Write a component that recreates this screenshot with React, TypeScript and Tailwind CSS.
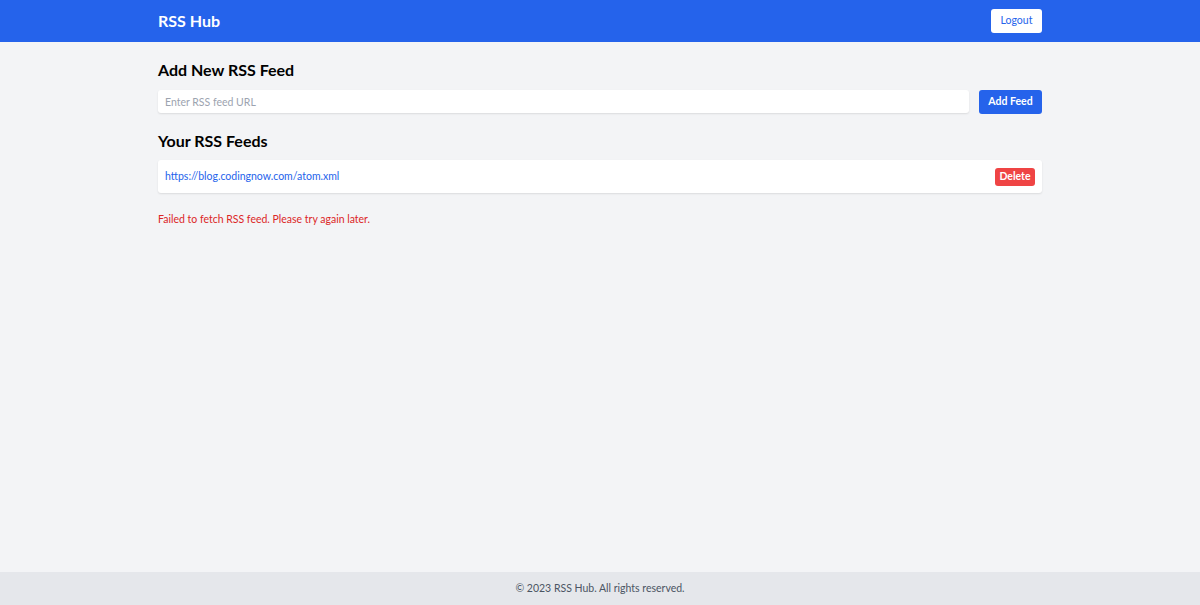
export default function App() {
  return (
    <div
      className="min-h-screen flex flex-col bg-[#f3f4f6]"
      style={{ fontFamily: 'Lato, "Noto Sans", sans-serif' }}
    >
      <header className="h-[42px] bg-[#2563eb] shrink-0">
        <div className="w-[884px] mx-auto h-full flex items-center justify-between">
          <h1 className="text-white font-bold text-[16px]">RSS Hub</h1>
          <button className="h-[24px] w-[51px] bg-white text-[#2563eb] text-[10.5px] rounded-[3px]">
            Logout
          </button>
        </div>
      </header>

      <main className="flex-1 w-[884px] mx-auto pt-[16px]">
        <h2 className="text-[16px] font-bold text-black leading-[24px]">Add New RSS Feed</h2>
        <div className="mt-[8px] flex gap-[10px]">
          <input
            className="flex-1 h-[23px] bg-white rounded-[3px] shadow-[0_1px_2px_rgba(0,0,0,0.1)] px-[7px] text-[10.5px] outline-none placeholder:text-[#9ca3af]"
            placeholder="Enter RSS feed URL"
          />
          <button className="w-[63px] h-[24px] bg-[#2563eb] text-white font-bold text-[10.5px] rounded-[3px]">
            Add Feed
          </button>
        </div>

        <h2 className="mt-[15px] text-[16px] font-bold text-black leading-[24px]">Your RSS Feeds</h2>
        <ul className="mt-[7px]">
          <li className="h-[33px] bg-white rounded-[3px] shadow-[0_1px_2px_rgba(0,0,0,0.1)] flex items-center justify-between pl-[7px] pr-[7px]">
            <a href="#" className="text-[10.5px] text-[#2563eb]">
              https://blog.codingnow.com/atom.xml
            </a>
            <button className="h-[18px] w-[40px] bg-[#ef4444] text-white font-bold text-[10.5px] rounded-[3px]">
              Delete
            </button>
          </li>
        </ul>

        <p className="mt-[19px] text-[10.5px] text-[#dc2626]">
          Failed to fetch RSS feed. Please try again later.
        </p>
      </main>

      <footer className="h-[33px] bg-[#e5e7eb] shrink-0 flex items-center justify-center">
        <p className="text-[10.5px] text-[#4b5563]">© 2023 RSS Hub. All rights reserved.</p>
      </footer>
    </div>
  );
}
